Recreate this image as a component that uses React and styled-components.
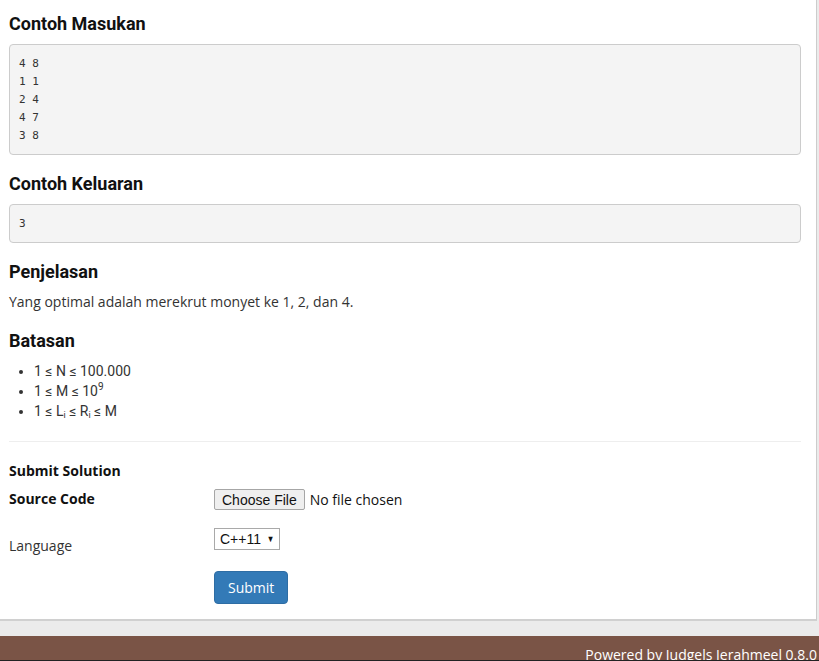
import React from "react";
import styled, { createGlobalStyle } from "styled-components";

const GlobalStyle = createGlobalStyle`
	html, body {
		margin: 0;
		padding: 0;
		background: #ebebeb;
		font-family: "Open Sans", "Liberation Sans", sans-serif;
		font-size: 14px;
		color: #333;
	}
`;

const Page = styled.div`
	display: flex;
	flex-direction: column;
	height: 661px;
	overflow: hidden;
`;

const Panel = styled.div`
	flex-shrink: 0;
	width: 817px;
	background: #fff;
	border-right: 1px solid #ccc;
	border-bottom: 2px solid #d0d0d0;
	padding: 0 15px 15px 9px;
	box-sizing: border-box;
`;

const Heading = styled.h4`
	font-family: Roboto, "Liberation Sans", sans-serif;
	font-weight: 700;
	font-size: 18px;
	line-height: 20px;
	color: #111;
	margin: ${(p) => p.$top || 19}px 0 10px;
`;

const Pre = styled.pre`
	margin: 0 0 10px;
	padding: 9.5px 9px;
	background: #f4f4f4;
	border: 1px solid #ccc;
	border-radius: 4px;
	font-family: "DejaVu Sans Mono", "Liberation Mono", monospace;
	font-size: 11px;
	line-height: 18px;
	color: #333;
`;

const Text = styled.p`
	margin: 0 0 7px;
	line-height: 20px;
`;

const List = styled.ul`
	margin: 0;
	padding-left: 25px;
	font-family: Roboto, "Liberation Sans", sans-serif;
	font-size: 14px;
	line-height: 20px;
	color: #333;
`;

const Sup = styled.sup`
	line-height: 0;
	font-size: 10px;
`;

const Sub = styled.sub`
	line-height: 0;
	font-size: 9px;
	vertical-align: -2px;
`;

const Divider = styled.hr`
	border: 0;
	border-top: 1px solid #eee;
	margin: 20px 0 19px;
`;

const FormTitle = styled.h5`
	margin: 0 0 8px;
	font-size: 14px;
	font-weight: 700;
	color: #111;
	line-height: 20px;
`;

const FormRow = styled.div`
	display: grid;
	grid-template-columns: 205px 1fr;
	align-items: start;
	margin-bottom: ${(p) => p.$gap ?? 15}px;
`;

const Label = styled.label`
	font-weight: ${(p) => (p.$bold ? 700 : 400)};
	color: ${(p) => (p.$bold ? "#111" : "#333")};
	line-height: 20px;
	padding-top: ${(p) => p.$pad || 0}px;
`;

const FileWrap = styled.div`
	display: flex;
	align-items: center;
	gap: 5px;
`;

const FileButton = styled.button`
	height: 21px;
	padding: 0 7px;
	background: #efefef;
	border: 1px solid #a6a6a6;
	border-radius: 2px;
	font-family: "Liberation Sans", Arial, sans-serif;
	font-size: 14px;
	color: #111;
`;

const FileName = styled.span`
	font-size: 14px;
	color: #111;
`;

const Select = styled.div`
	display: inline-flex;
	align-items: center;
	gap: 5px;
	height: 20px;
	padding: 0 4px 0 5px;
	border: 1px solid #a9a9a9;
	background: #fff;
	font-family: "Liberation Sans", Arial, sans-serif;
	font-size: 14px;
	color: #111;
	justify-self: start;
`;

const Caret = styled.span`
	font-size: 9px;
	transform: scaleX(0.85);
`;

const SubmitButton = styled.button`
	grid-column: 2;
	justify-self: start;
	height: 33px;
	padding: 0 13px;
	background: #337ab7;
	border: 1px solid #2e6da4;
	border-radius: 4px;
	color: #fff;
	font-family: "Open Sans", sans-serif;
	font-size: 14px;
`;

const Spacer = styled.div`
	flex-shrink: 0;
	height: 15px;
`;

const Footer = styled.footer`
	flex: 1;
	min-height: 0;
	overflow: hidden;
	background: #7a5446;
	color: #fff;
	text-align: right;
	padding: 9px 2px 0 0;
	font-size: 14px;
	line-height: 20px;
	border-bottom: 1px solid #222;
`;

export default function App() {
	return (
		<Page>
			<GlobalStyle />
			<Panel>
				<Heading $top={14}>Contoh Masukan</Heading>
				<Pre>{"4 8\n1 1\n2 4\n4 7\n3 8"}</Pre>
				<Heading>Contoh Keluaran</Heading>
				<Pre>3</Pre>
				<Heading>Penjelasan</Heading>
				<Text>Yang optimal adalah merekrut monyet ke 1, 2, dan 4.</Text>
				<Heading>Batasan</Heading>
				<List>
					<li>1 ≤ N ≤ 100.000</li>
					<li>
						1 ≤ M ≤ 10<Sup>9</Sup>
					</li>
					<li>
						1 ≤ L<Sub>i</Sub> ≤ R<Sub>i</Sub> ≤ M
					</li>
				</List>
				<Divider />
				<FormTitle>Submit Solution</FormTitle>
				<FormRow $gap={18}>
					<Label $bold>Source Code</Label>
					<FileWrap>
						<FileButton>Choose File</FileButton>
						<FileName>No file chosen</FileName>
					</FileWrap>
				</FormRow>
				<FormRow $gap={15}>
					<Label $pad={8}>Language</Label>
					<Select>
						C++11 <Caret>▼</Caret>
					</Select>
				</FormRow>
				<FormRow $gap={0}>
					<SubmitButton>Submit</SubmitButton>
				</FormRow>
			</Panel>
			<Spacer />
			<Footer>Powered by Judgels Jerahmeel 0.8.0</Footer>
		</Page>
	);
}
